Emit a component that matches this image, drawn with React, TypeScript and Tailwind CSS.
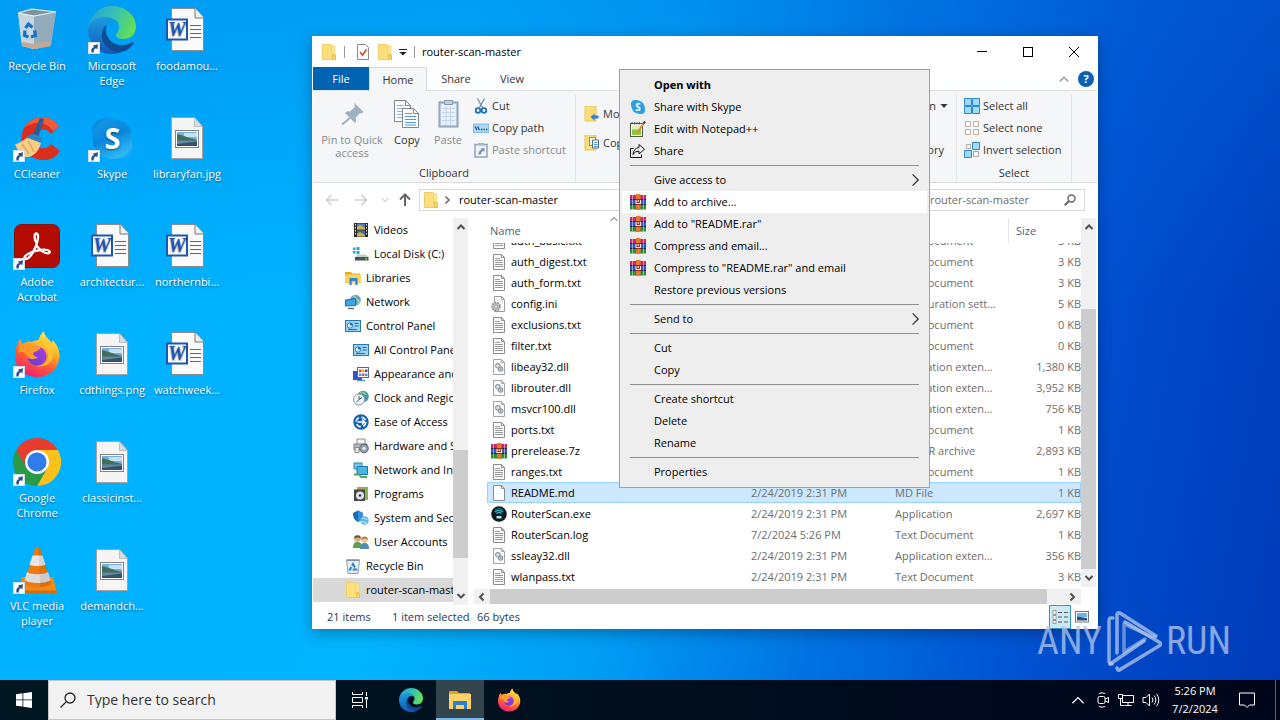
import React from "react";

type P = { className?: string };
type IconType = (p: P) => React.ReactElement;

/* ---------- desktop icons ---------- */

const ShortcutBadge = () => (
  <svg viewBox="0 0 12 12" className="absolute bottom-0 left-0 size-3">
    <rect width="12" height="12" fill="#fff" />
    <rect x=".5" y=".5" width="11" height="11" fill="none" stroke="#d5dde6" />
    <path d="M3.500 10.500C2.800 7.500 3.800 5.600 6 5L5 3.500l5-1.200-.6 5L8 6.200C6.200 6.800 5.600 8 5.800 10.500z" fill="#2d4f8e" />
  </svg>
);

const BinIcon: IconType = ({ className }) => (
  <svg viewBox="0 0 48 48" className={className}>
    <path d="M5 7l14-4 24 3-6 34-16 3-12-3z" fill="#a9c0cf" />
    <path d="M5 7l16 3v33l-12-3z" fill="#c6d6df" />
    <path d="M21 10l22-4-5 34-17 3z" fill="#93abbb" />
    <path d="M9 36l12 2 17-3-1 5-16 3-12-3z" fill="#c3a995" />
    <path d="M5 7l14-4 24 3-22 4z" fill="#7e909c" stroke="#eef5f9" strokeWidth="1.200" />
    <g fill="none" stroke="#1473c8" strokeWidth="3.200">
      <path d="M12.500 22l3-4 4 3.500" />
      <path d="M21.500 24.500l1 5-4.500 1.500" />
      <path d="M15.500 31l-4-1.500.5-5" />
    </g>
  </svg>
);

const EdgeIcon: IconType = ({ className }) => (
  <svg viewBox="0 0 48 48" className={className}>
    <defs>
      <linearGradient id="edgeTop" x1="0" y1=".3" x2="1" y2=".6">
        <stop offset="0" stopColor="#2aa0d4" />
        <stop offset=".5" stopColor="#36c2b4" />
        <stop offset="1" stopColor="#66e050" />
      </linearGradient>
      <linearGradient id="edgeLeft" x1="0" y1="0" x2="0" y2="1">
        <stop offset="0" stopColor="#1a9de0" />
        <stop offset="1" stopColor="#1257b8" />
      </linearGradient>
    </defs>
    <path d="M0 23C2 8 13 0 24 0c14 0 24 10 24 20 0 9-6 13-13 13-5 0-7-2-7-4s3-3 3-8c0-6-6-9.500-13-9.500C9 11.500 3 16 0 23z" fill="url(#edgeTop)" />
    <path d="M0 24c0-8 8-13 17-13 7 0 12 3 13.500 7C28 15 22 15 18.500 19 12 27 17 43 33 46.300 30 47.500 27 48 24 48 10 48 0 37 0 24z" fill="url(#edgeLeft)" />
    <path d="M18.500 19c-2 8 1 14 7 18 6 3.500 13 2.500 18-.500 2-1 2.500.500 1.500 2-3 4-7 6.500-12 7.800C20 46 12 36 14 27c.8-4 2.500-6.500 4.500-8z" fill="#114b94" />
  </svg>
);

const WordIcon: IconType = ({ className }) => (
  <svg viewBox="0 0 48 48" className={className}>
    <path d="M8.500 2.500h24l8 9v33h-32z" fill="#fafafa" stroke="#8b8b8b" />
    <path d="M32 2.500v9.500h9" fill="#eef0f2" stroke="#777" />
    <g stroke="#3f6cb6" strokeWidth="1.200">
      <path d="M27 19.500h11M27 23.500h11M27 27.500h11M27 31.500h11" />
    </g>
    <rect x="4" y="13.500" width="20" height="20" fill="#fff" stroke="#1d55b5" strokeWidth="2" />
    <text x="14" y="30" textAnchor="middle" fontFamily="Liberation Serif, serif" fontSize="20" fontWeight="bold" fontStyle="italic" fill="#1d55b5">W</text>
  </svg>
);

const ImageFileIcon: IconType = ({ className }) => (
  <svg viewBox="0 0 48 48" className={className}>
    <path d="M8.500 3.500h23l8 9v32h-31z" fill="#f5f5f5" stroke="#a8a19b" />
    <path d="M31.500 3.500v9h8z" fill="#d3dfe8" stroke="#b7b2ae" strokeWidth=".8" />
    <rect x="12.500" y="16.500" width="23" height="17" fill="#fff" stroke="#7e8487" />
    <path d="M14 18h20v7H14z" fill="#77afe2" />
    <path d="M21 19h13v4H21z" fill="#c7e0f3" />
    <path d="M14 20l7 2 7 2.500 6 1V27H14z" fill="#426d57" />
    <path d="M14 26.500h20V32H14z" fill="#6389a3" />
    <path d="M14 30l20-2.500V32H14z" fill="#315270" />
  </svg>
);

const CCleanerIcon: IconType = ({ className }) => (
  <svg viewBox="0 0 48 48" className={className}>
    <path d="M46 12C38-1 18 1 11 14 4 28 13 45 29 46c8 .5 14-3 18-9l-9-7c-5 7-15 5-16-3-2-10 10-16 16-7z" fill="#dc2e1f" />
    <path d="M46 12C38-1 18 1 11 14c9-7 21-8 29 3z" fill="#f15a38" />
    <path d="M27 4l4 1-8 25-6-2z" fill="#285f99" />
    <path d="M13 24c3-6 11-5 16 1l-3 5-13-1z" fill="#337fc0" />
    <path d="M2 30c6 0 9-6 13-6l13 5c-2 8-7 13-13 14C8 44 5 37 2 30z" fill="#f8ce83" />
    <path d="M9 30l7 10M15 27l6 11" stroke="#e3a659" strokeWidth="1.500" />
  </svg>
);

const SkypeIcon: IconType = ({ className }) => (
  <svg viewBox="0 0 48 48" className={className}>
    <defs>
      <linearGradient id="skype" x1="0" y1="0" x2=".5" y2="1">
        <stop offset="0" stopColor="#149be9" />
        <stop offset=".55" stopColor="#0a86dc" />
        <stop offset="1" stopColor="#2cb9f3" />
      </linearGradient>
    </defs>
    <circle cx="17" cy="17" r="13" fill="#0d8edf" />
    <circle cx="33" cy="33" r="12" fill="#1da9ef" />
    <circle cx="24.500" cy="25" r="20" fill="url(#skype)" />
    <text x="24.500" y="35" textAnchor="middle" fontFamily="Open Sans, sans-serif" fontSize="29" fontWeight="bold" fill="#fff">S</text>
  </svg>
);

const AcrobatIcon: IconType = ({ className }) => (
  <svg viewBox="0 0 48 48" className={className}>
    <rect x="1.500" y="2.500" width="45" height="43" rx="7" fill="#b30b00" stroke="#7c1713" />
    <path d="M23.500 21c-3-5-2-9.500-.2-9.500 2.500 0 2.500 6-1 14-3 7-7 11.500-9.500 11.500-2.300 0-2-3 3-5.500 5-2.600 14-4.500 18.500-3.500 3.500.8 3 3.300.3 3.300-3.200 0-8-3-11-8" fill="none" stroke="#fff" strokeWidth="2.300" />
  </svg>
);

const FirefoxIcon: IconType = ({ className }) => (
  <svg viewBox="0 0 48 48" className={className}>
    <defs>
      <linearGradient id="foxBody" x1=".8" y1="0" x2=".3" y2="1">
        <stop offset="0" stopColor="#fff44f" />
        <stop offset=".35" stopColor="#ffb52b" />
        <stop offset=".65" stopColor="#ff5c36" />
        <stop offset="1" stopColor="#f01c78" />
      </linearGradient>
      <linearGradient id="foxCore" x1="0" y1="1" x2="1" y2="0">
        <stop offset="0" stopColor="#5b3fd0" />
        <stop offset="1" stopColor="#b43be0" />
      </linearGradient>
    </defs>
    <path d="M8 9c0 2 .5 4 1.500 5 3-2 6-3 9-2 2-1 4-2 7-2 1-4 3-7 5.500-9 0 5 5 8 8 12l.5-3c4 4 7.500 10 7 17-1 12-10 20-22 20C11 47 2 38 2 26c0-7 2-13 6-17z" fill="url(#foxBody)" />
    <circle cx="24" cy="26" r="9.500" fill="url(#foxCore)" />
    <path d="M7 16c4-4 9-4 13-1 2 2 5 2 8 2-1 4-7 4-8 7 1 2 3 3 5 3-3 3-9 3-11-1-2-5-5-5-9-3z" fill="#ff9a2a" />
    <path d="M25 11c7 2 11 8 10 16-1 6-6 9-12 9 8 2 16-2 17-10 1-9-5-16-15-15z" fill="#ffc832" opacity=".8" />
  </svg>
);

const ChromeIcon: IconType = ({ className }) => (
  <svg viewBox="0 0 48 48" className={className}>
    <path d="M24 48A24 24 0 0 0 44.800 12H24l10.400 18z" fill="#fcc21b" />
    <path d="M3.200 12A24 24 0 0 1 44.800 12H24L13.600 30z" fill="#ea3b30" />
    <path d="M3.200 12A24 24 0 0 0 24 48l10.400-18L24 32 13.600 30z" fill="#2a9a47" />
    <circle cx="24" cy="24" r="12" fill="#fff" />
    <circle cx="24" cy="24" r="9.600" fill="#2f7cea" />
  </svg>
);

const VlcIcon: IconType = ({ className }) => (
  <svg viewBox="0 0 48 48" className={className}>
    <path d="M9 31h31l4 16H5z" fill="#f08a13" />
    <path d="M5 44.500h38.600l.6 2.500H5z" fill="#d66a05" />
    <path d="M22 2.500c1-1.500 4-1.500 5 0l11 35c-2 5-25 5-27 0z" fill="#ec7a0e" />
    <path d="M19.500 9.500h10l3 9c-3 2-13 2-16 0z" fill="#e7e7e7" />
    <path d="M14 26c4 3 17 3 21 0l2.500 8c-4 4-22 4-26 0z" fill="#dcdcdc" />
    <path d="M25 1.500c1 0 2 .3 2.300 1l11 35c-1 2-6 3.500-11 3.700z" fill="#000" opacity=".08" />
  </svg>
);

type DesktopItem = { label: string; icon: IconType; shortcut?: boolean };
const desktop: DesktopItem[] = [
  { label: "Recycle Bin", icon: BinIcon },
  { label: "CCleaner", icon: CCleanerIcon, shortcut: true },
  { label: "Adobe Acrobat", icon: AcrobatIcon, shortcut: true },
  { label: "Firefox", icon: FirefoxIcon, shortcut: true },
  { label: "Google Chrome", icon: ChromeIcon, shortcut: true },
  { label: "VLC media player", icon: VlcIcon, shortcut: true },
  { label: "Microsoft Edge", icon: EdgeIcon, shortcut: true },
  { label: "Skype", icon: SkypeIcon, shortcut: true },
  { label: "architectur...", icon: WordIcon },
  { label: "cdthings.png", icon: ImageFileIcon },
  { label: "classicinst...", icon: ImageFileIcon },
  { label: "demandch...", icon: ImageFileIcon },
  { label: "foodamou...", icon: WordIcon },
  { label: "libraryfan.jpg", icon: ImageFileIcon },
  { label: "northernbi...", icon: WordIcon },
  { label: "watchweek...", icon: WordIcon },
];

/* ---------- small icons ---------- */

const FolderIcon: IconType = ({ className }) => (
  <svg viewBox="0 0 16 16" className={className}>
    <path d="M1.500.5H10l1.500 1.500V15.500h-10z" fill="#fddf7c" stroke="#f0cd6a" />
    <path d="M10.500 2h3.500v9h-3.500z" fill="#ffe695" stroke="#efcc6c" strokeWidth=".7" />
    <path d="M11.500 10.500l3 .5v4.500h-3z" fill="#fbd35c" stroke="#e9c04e" />
  </svg>
);

const RarIcon: IconType = ({ className }) => (
  <svg viewBox="0 0 16 16" className={className}>
    <rect y="1" width="16" height="5" fill="#c92a63" />
    <rect y="6" width="16" height="5" fill="#3356c4" />
    <rect y="11" width="16" height="4.500" fill="#278c3b" />
    <path d="M0 5.500h16M0 10.500h16" stroke="#14204e" />
    <path d="M2.500 1v14.500M13.500 1v14.500" stroke="#fff" strokeOpacity=".45" />
    <rect x="6" y="0" width="4.500" height="16" fill="#e47a28" />
    <rect x="5" y="5" width="6.500" height="6" fill="#8a2c20" />
    <path d="M6 6v3.500h4.500V6M8.200 6v2" stroke="#f3e9dc" strokeWidth="1.200" fill="none" />
  </svg>
);

const TextIcon: IconType = ({ className }) => (
  <svg viewBox="0 0 16 16" className={className}>
    <path d="M2.500.5h8l3 3v12h-11z" fill="#fdfdfd" stroke="#8d8d8d" />
    <path d="M10.500.5v3h3" fill="none" stroke="#8d8d8d" />
    <path d="M4 4.500h5M4 6.500h8M4 8.500h8M4 10.500h8M4 12.500h8" stroke="#9a9a9a" />
  </svg>
);
const BlankIcon: IconType = ({ className }) => (
  <svg viewBox="0 0 16 16" className={className}>
    <path d="M2.500.5h8l3 3v12h-11z" fill="#fff" stroke="#8d8d8d" />
    <path d="M10.500.5v3h3" fill="none" stroke="#8d8d8d" />
  </svg>
);
const DllIcon: IconType = ({ className }) => (
  <svg viewBox="0 0 16 16" className={className}>
    <path d="M2.500.5h8l3 3v12h-11z" fill="#fbfbfb" stroke="#a3a3a3" />
    <path d="M10.500.5v3h3" fill="none" stroke="#a3a3a3" />
    <circle cx="6.800" cy="6.800" r="2.200" fill="#e5eaee" stroke="#8c98a1" strokeWidth="1.200" />
    <circle cx="9.500" cy="10" r="2.200" fill="#d5dce1" stroke="#8c98a1" strokeWidth="1.200" />
    <circle cx="9.500" cy="10" r=".7" fill="#6f7b84" />
  </svg>
);
const IniIcon: IconType = ({ className }) => (
  <svg viewBox="0 0 16 16" className={className}>
    <path d="M3.500.5h7l3 3v12h-10z" fill="#fbfbfb" stroke="#9c9c9c" />
    <path d="M10.500.5v3h3" fill="none" stroke="#9c9c9c" />
    <circle cx="5" cy="10.500" r="4" fill="#c9c9c9" stroke="#8a8a8a" strokeDasharray="1.800 1" strokeWidth="1.600" />
    <circle cx="5" cy="10.500" r="1.500" fill="#fff" stroke="#777" strokeWidth=".8" />
  </svg>
);
const RouterIcon: IconType = ({ className }) => (
  <svg viewBox="0 0 16 16" className={className}>
    <circle cx="8" cy="8" r="7.800" fill="#0c1a22" />
    <path d="M3.800 6a6 6 0 0 1 8.400 0M5.400 7.600a3.800 3.800 0 0 1 5.200 0" stroke="#2bb8d8" fill="none" strokeWidth="1.200" />
    <path d="M5.500 10h5v2.500h-5z" fill="#b9e5ee" />
    <path d="M4 3.800a7 7 0 0 1 8 0" stroke="#1c7d94" fill="none" />
  </svg>
);

const VideosIcon: IconType = ({ className }) => (
  <svg viewBox="0 0 16 16" className={className}>
    <rect x="1" y="1" width="14" height="14" fill="#2b2b2b" />
    <rect x="4" y="1.500" width="8" height="6" fill="#4a7fc4" />
    <rect x="4" y="8.500" width="8" height="6" fill="#3c6cab" />
    <path d="M4 5l3-2 5 3v1.500H4zM4 12l3-2 5 3v1.500H4z" fill="#d8b23c" />
    <path d="M2.500 2v12M13.500 2v12" stroke="#e5e5e5" strokeDasharray="1.500 1.500" />
  </svg>
);
const DiskIcon: IconType = ({ className }) => (
  <svg viewBox="0 0 16 16" className={className}>
    <path d="M0 1.500h2.500v2.500H0zM3.500 1h3v3h-3zM0 5h2.500v2.500H0zM3.500 5h3v3h-3z" fill="#1fa6dc" />
    <path d="M4 8.500h9l2.500 3h-13z" fill="#c9cdd0" />
    <rect x="2" y="11" width="13.500" height="3.500" fill="#4c5358" />
    <rect x="12" y="12" width="2" height="1.500" fill="#57d357" />
  </svg>
);
const LibrariesIcon: IconType = ({ className }) => (
  <svg viewBox="0 0 16 16" className={className}>
    <path d="M0 2h6l1 1.500h8V6H0z" fill="#e8a825" />
    <path d="M0 4.500h16v9H0z" fill="#fdd35f" />
    <path d="M4.500 8h8v7h-2.200v-4H6.700v4H4.500z" fill="#2f87d5" />
  </svg>
);
const NetworkIcon: IconType = ({ className }) => (
  <svg viewBox="0 0 16 16" className={className}>
    <circle cx="10.500" cy="6" r="5.300" fill="#6a9fc6" />
    <path d="M8 1.500c3 1 1 3 4 4s2 3 1 5" stroke="#a9d3a5" strokeWidth="1.500" fill="none" />
    <path d="M.5 6l10-1.500v7L.5 12z" fill="#3ba5e6" stroke="#1c6ea6" />
    <path d="M3 14.500h6" stroke="#5a7384" strokeWidth="1.500" />
  </svg>
);
const ControlIcon: IconType = ({ className }) => (
  <svg viewBox="0 0 16 16" className={className}>
    <rect x=".5" y="2.500" width="15" height="11" fill="#9bd3f2" stroke="#2b76ac" />
    <circle cx="5" cy="7.500" r="2.700" fill="#e6f4fb" stroke="#2579b7" />
    <path d="M5 7.500V5a2.500 2.500 0 0 1 2.500 2.500z" fill="#1c6aab" />
    <path d="M9.500 5.500h4M9.500 8h4M3 11.500h9" stroke="#1f6ea9" />
  </svg>
);
const AppearanceIcon: IconType = ({ className }) => (
  <svg viewBox="0 0 16 16" className={className}>
    <rect x="0" y="5" width="9" height="9" fill="#3850c8" />
    <rect x="4.500" y="1.500" width="11" height="10" fill="#fff" stroke="#5b6a78" />
    <path d="M6 3.500h2.500V6H6z" fill="#e0483a" />
    <path d="M9 3.500h2.500V6H9z" fill="#f2a52c" />
    <path d="M12 3.500h2.500V6H12z" fill="#5b3ca8" />
    <path d="M6 7.500h2.500V10H6zM12 7.500h2.500V10H12z" fill="#39a0db" />
    <path d="M9 7.500h2.500V10H9z" fill="#d34f9c" />
    <path d="M4 14.500h8" stroke="#5b8fb8" strokeWidth="1.500" />
  </svg>
);
const ClockIcon: IconType = ({ className }) => (
  <svg viewBox="0 0 16 16" className={className}>
    <circle cx="10" cy="6.500" r="5.800" fill="#4b93a8" />
    <path d="M7 2c3 1 4 0 6 3" stroke="#8fc48a" strokeWidth="2" fill="none" />
    <circle cx="6" cy="9.500" r="5.500" fill="#eef3f6" stroke="#8399a6" />
    <path d="M6 6v3.500L3.500 12M6 9.500l3-2" stroke="#41525d" fill="none" />
  </svg>
);
const EaseIcon: IconType = ({ className }) => (
  <svg viewBox="0 0 16 16" className={className}>
    <circle cx="8" cy="8" r="7.700" fill="#1260b0" />
    <circle cx="8" cy="8" r="4.800" fill="none" stroke="#fff" strokeDasharray="5 2.500" strokeWidth="1.500" />
    <path d="M4.500 8h7M9 5.500L11.500 8 9 10.500" stroke="#fff" strokeWidth="1.300" fill="none" />
  </svg>
);
const HardwareIcon: IconType = ({ className }) => (
  <svg viewBox="0 0 16 16" className={className}>
    <path d="M4 1h8v6H4z" fill="#f4f4f4" stroke="#8b8b8b" />
    <path d="M1 6h13v6H1z" fill="#b7bcc0" stroke="#73797e" />
    <circle cx="11" cy="10.500" r="4.300" fill="#91a1ac" stroke="#56636c" />
    <circle cx="11" cy="10.500" r="1.800" fill="#dfe7ec" />
    <path d="M2 9.500h4v5H2z" fill="#e8e8e8" stroke="#8b8b8b" />
  </svg>
);
const NetInternetIcon: IconType = ({ className }) => (
  <svg viewBox="0 0 16 16" className={className}>
    <path d="M1 1h8v6H1z" fill="#6fcbe9" stroke="#2a86a8" />
    <path d="M4 4.500h10.500v8H4z" fill="#45b4e6" stroke="#1c77a8" />
    <path d="M1 12.500h5L8 15h6" stroke="#52a851" strokeWidth="1.800" fill="none" />
  </svg>
);
const ProgramsIcon: IconType = ({ className }) => (
  <svg viewBox="0 0 16 16" className={className}>
    <path d="M4 1h10v11H4z" fill="#c8974c" />
    <path d="M11 1h4v13h-4z" fill="#86b457" />
    <rect x="1" y="3.500" width="11" height="11.500" fill="#45484b" />
    <circle cx="7" cy="9.500" r="4" fill="#dfe3e6" />
    <circle cx="7" cy="9.500" r="1.200" fill="#2b2b2b" />
  </svg>
);
const SystemIcon: IconType = ({ className }) => (
  <svg viewBox="0 0 16 16" className={className}>
    <path d="M0 3l5-2.500L10 3c0 5-1 7-5 9C1 10 0 7 0 3z" fill="#1a68b8" />
    <path d="M5 .5L10 3c0 5-1 7-5 9z" fill="#3394dc" />
    <circle cx="11.500" cy="10.500" r="4.300" fill="#58b9e6" />
    <path d="M9 9c2-2 3 1 5.500 0M8 12c3-1 3 1 6 1" stroke="#e0f3fb" fill="none" />
  </svg>
);
const UsersIcon: IconType = ({ className }) => (
  <svg viewBox="0 0 16 16" className={className}>
    <path d="M0 14c0-5 2-6 4.500-6S9 9 9 14z" fill="#5fa04b" />
    <path d="M7 15c0-5 2-6 4.500-6S16 10 16 15z" fill="#4f8cc0" />
    <circle cx="4.500" cy="4.500" r="3.300" fill="#d9ad7e" />
    <path d="M1.200 4.500a3.300 3.300 0 0 1 6.600 0C6 3 4 3 1.200 4.500z" fill="#765034" />
    <circle cx="11.500" cy="5.500" r="3.300" fill="#ecc79c" />
    <path d="M8.200 6a3.300 3.300 0 0 1 6.600 0c-2-2-4-2-6.600 0z" fill="#b07a3a" />
  </svg>
);
const BinSmallIcon: IconType = ({ className }) => (
  <svg viewBox="0 0 16 16" className={className}>
    <path d="M1.500 2.500h13l-1.500 13H3z" fill="#e4edf3" stroke="#93a3ad" />
    <path d="M1.500 2h13" stroke="#7c8d98" strokeWidth="1.500" />
    <path d="M8 6l3 5.500H5z" fill="none" stroke="#2580c9" strokeWidth="2" strokeDasharray="4 1.500" />
  </svg>
);

const Chevron = ({ dir, className }: { dir: "up" | "down" | "left" | "right"; className: string }) => {
  const d = {
    up: "M1.500 7L5 3.500 8.500 7",
    down: "M1.500 3L5 6.500 8.500 3",
    left: "M6.500 1.500L3 5l3.500 3.500",
    right: "M3.500 1.500L7 5 3.500 8.500",
  }[dir];
  return (
    <svg viewBox="0 0 10 10" fill="none" stroke="currentColor" className={className}>
      <path d={d} />
    </svg>
  );
};

/* ---------- ribbon icons ---------- */

const PinIcon: IconType = ({ className }) => (
  <svg viewBox="0 0 32 32" className={className}>
    <path d="M18.500 4l9 9-2 1.500-1.500-.500-4.500 5c1 2 .5 4-.5 5L9 14c1-1.500 3.500-2 5-1.500l5-4.500-.5-1.500z" fill="#9db0c4" />
    <path d="M14 19l-8 6.500" stroke="#9db0c4" strokeWidth="2" />
  </svg>
);
const CopyIcon: IconType = ({ className }) => (
  <svg viewBox="0 0 32 32" className={className}>
    <path d="M3.500 1.500h11l5 5v16h-16z" fill="#fff" stroke="#7b8794" />
    <path d="M14.500 1.500v5h5" fill="none" stroke="#7b8794" />
    <path d="M6 6.500h7M6 9.500h11M6 12.500h11M6 15.500h11M6 18.500h11" stroke="#84b6e8" />
    <path d="M11.500 9.500h11l5 5v14h-16z" fill="#fff" stroke="#7b8794" />
    <path d="M22.500 9.500v5h5" fill="none" stroke="#7b8794" />
    <path d="M14 14.500h7M14 17.500h11M14 20.500h11M14 23.500h11M14 26h11" stroke="#4f97de" />
  </svg>
);
const PasteIcon: IconType = ({ className }) => (
  <svg viewBox="0 0 32 32" className={className}>
    <rect x="7.500" y="3.500" width="18" height="24" fill="#e9f0f9" stroke="#97a8c1" strokeWidth="2.200" />
    <path d="M12.500 1.500h8v4h-8z" fill="#c3cfdd" stroke="#8296ae" />
    <path d="M10 9.500h13M10 13.500h13M10 17.500h13M10 21.500h13M14 8v18M18.500 8v18" stroke="#c4d5ea" />
  </svg>
);
const CutIcon: IconType = ({ className }) => (
  <svg viewBox="0 0 16 16" className={className}>
    <path d="M4.500.5l5.500 10M11.500.5L6 10.500" stroke="#8195a6" strokeWidth="1.400" />
    <circle cx="5" cy="12.500" r="2.300" fill="none" stroke="#1b75bc" strokeWidth="1.800" />
    <circle cx="11" cy="12.500" r="2.300" fill="none" stroke="#1b75bc" strokeWidth="1.800" />
  </svg>
);
const PathIcon: IconType = ({ className }) => (
  <svg viewBox="0 0 16 16" className={className}>
    <rect x=".5" y="4" width="15" height="8.500" fill="#a9d9f7" stroke="#80bce6" />
    <path d="M2 6.500l2 3.500M4.500 6.500l2 3.500" stroke="#174a78" strokeWidth="1.200" />
    <path d="M8 9.500h1.300M10.500 9.500h1.300M13 9.500h1.300" stroke="#174a78" strokeWidth="1.300" />
  </svg>
);
const PasteShortcutIcon: IconType = ({ className }) => (
  <svg viewBox="0 0 16 16" className={className}>
    <rect x="2" y="2.500" width="12" height="12.500" fill="#f0f4fa" stroke="#8fa2bd" strokeWidth="1.500" />
    <path d="M5 1h6v2.500H5z" fill="#a9b8ca" />
    <path d="M5.500 12.500c0-3 1-4.500 3-4.500L7.500 6.500l4-.5v4l-1.300-1C8.500 9.500 8 10.500 8 12.500z" fill="#7d92b1" />
  </svg>
);
const MoveIcon: IconType = ({ className }) => (
  <svg viewBox="0 0 16 16" className={className}>
    <path d="M1 0h11v15H1z" fill="#fcdc77" stroke="#e7c45f" />
    <path d="M14.500 9.500h-4V7.500L6.500 11l4 3.500v-2h4z" fill="#2f7fd3" />
  </svg>
);
const CopyToIcon: IconType = ({ className }) => (
  <svg viewBox="0 0 16 16" className={className}>
    <path d="M1 0h11v15H1z" fill="#fcdc77" stroke="#e7c45f" />
    <path d="M5.500 2.500h6v8h-6z" fill="#fff" stroke="#7d8793" />
    <path d="M8.500 5h6v8h-6z" fill="#fff" stroke="#5a6a80" />
    <path d="M10 7.500h3.500M10 9.500h3.500M10 11.500h3.500" stroke="#4f97de" />
  </svg>
);
const SelectAllIcon: IconType = ({ className }) => (
  <svg viewBox="0 0 16 16" className={className}>
    <path d="M.5.5h7v7h-7zM8.500.5h7v7h-7zM.5 8.500h7v7h-7zM8.500 8.500h7v7h-7z" fill="#9cdcfb" stroke="#2d8ac9" />
  </svg>
);
const SelectNoneIcon: IconType = ({ className }) => (
  <svg viewBox="0 0 16 16" className={className}>
    <path d="M1.500 1.500h5v5h-5zM9.500 1.500h5v5h-5zM1.500 9.500h5v5h-5zM9.500 9.500h5v5h-5z" fill="#fdfdfd" stroke="#c0a99f" />
  </svg>
);
const InvertIcon: IconType = ({ className }) => (
  <svg viewBox="0 0 16 16" className={className}>
    <path d="M2.500 2.500h4v4h-4zM9.500 9.500h5v5h-5z" fill="#fdfdfd" stroke="#b3a39d" />
    <path d="M8.500.5h7v7h-7zM.5 8.500h7v7h-7z" fill="#9cdcfb" stroke="#2d8ac9" />
  </svg>
);

/* ---------- explorer data ---------- */

const tree: { label: string; icon: IconType; deep?: boolean; selected?: boolean }[] = [
  { label: "Videos", icon: VideosIcon, deep: true },
  { label: "Local Disk (C:)", icon: DiskIcon, deep: true },
  { label: "Libraries", icon: LibrariesIcon },
  { label: "Network", icon: NetworkIcon },
  { label: "Control Panel", icon: ControlIcon },
  { label: "All Control Panel Items", icon: ControlIcon, deep: true },
  { label: "Appearance and Personalization", icon: AppearanceIcon, deep: true },
  { label: "Clock and Region", icon: ClockIcon, deep: true },
  { label: "Ease of Access", icon: EaseIcon, deep: true },
  { label: "Hardware and Sound", icon: HardwareIcon, deep: true },
  { label: "Network and Internet", icon: NetInternetIcon, deep: true },
  { label: "Programs", icon: ProgramsIcon, deep: true },
  { label: "System and Security", icon: SystemIcon, deep: true },
  { label: "User Accounts", icon: UsersIcon, deep: true },
  { label: "Recycle Bin", icon: BinSmallIcon },
  { label: "router-scan-master", icon: FolderIcon, selected: true },
];

const old = "2/24/2019 2:31 PM";
const files: [string, IconType, string, string, string][] = [
  ["auth_basic.txt", TextIcon, old, "Text Document", "3 KB"],
  ["auth_digest.txt", TextIcon, old, "Text Document", "3 KB"],
  ["auth_form.txt", TextIcon, old, "Text Document", "3 KB"],
  ["config.ini", IniIcon, old, "Configuration sett...", "5 KB"],
  ["exclusions.txt", TextIcon, old, "Text Document", "0 KB"],
  ["filter.txt", TextIcon, old, "Text Document", "0 KB"],
  ["libeay32.dll", DllIcon, old, "Application exten...", "1,380 KB"],
  ["librouter.dll", DllIcon, old, "Application exten...", "3,952 KB"],
  ["msvcr100.dll", DllIcon, old, "Application exten...", "756 KB"],
  ["ports.txt", TextIcon, old, "Text Document", "1 KB"],
  ["prerelease.7z", RarIcon, old, "WinRAR archive", "2,893 KB"],
  ["ranges.txt", TextIcon, old, "Text Document", "1 KB"],
  ["README.md", BlankIcon, old, "MD File", "1 KB"],
  ["RouterScan.exe", RouterIcon, old, "Application", "2,697 KB"],
  ["RouterScan.log", TextIcon, "7/2/2024 5:26 PM", "Text Document", "1 KB"],
  ["ssleay32.dll", DllIcon, old, "Application exten...", "356 KB"],
  ["wlanpass.txt", TextIcon, old, "Text Document", "3 KB"],
];

/* ---------- context menu ---------- */

const SkypeSmall: IconType = ({ className }) => (
  <svg viewBox="0 0 16 16" className={className}>
    <rect x="1" y="1" width="9" height="9" rx="4" fill="#2d9fe3" />
    <rect x="6" y="6" width="9" height="9" rx="4" fill="#2d9fe3" />
    <circle cx="8" cy="8" r="6.300" fill="#2d9fe3" />
    <text x="8" y="11.800" textAnchor="middle" fontFamily="Open Sans, sans-serif" fontSize="10" fontWeight="bold" fill="#fff">S</text>
  </svg>
);
const NotepadIcon: IconType = ({ className }) => (
  <svg viewBox="0 0 16 16" className={className}>
    <rect x=".5" y="2.500" width="12" height="13" fill="#fff" stroke="#4e5a4a" />
    <path d="M2 4.500h9v9.500H2z" fill="#dff0b0" />
    <path d="M2 8.500h9V14H2z" fill="#8fc63c" />
    <path d="M2 1v2.500M4.500 1v2.500M7 1v2.500M9.500 1v2.500" stroke="#555" />
    <path d="M14.500 1L9 9.500l-1 2" stroke="#d88a2d" strokeWidth="2" fill="none" />
    <path d="M13.500 2.500L15 .5" stroke="#5a2d22" strokeWidth="2" />
  </svg>
);
const ShareIcon: IconType = ({ className }) => (
  <svg viewBox="0 0 16 16" fill="none" stroke="#111" className={className}>
    <path d="M3.500 5.500H.5v9h11V11.500" />
    <path d="M9 1.500l5.500 4.700-5.500 4.800V8.200c-3 0-4.500 1-6 3.300.3-4 2.500-6.500 6-7z" />
  </svg>
);

type MenuEntry = { label: string; icon?: IconType; sub?: boolean; bold?: boolean; active?: boolean };
const menu: MenuEntry[][] = [
  [
    { label: "Open with", bold: true },
    { label: "Share with Skype", icon: SkypeSmall },
    { label: "Edit with Notepad++", icon: NotepadIcon },
    { label: "Share", icon: ShareIcon },
  ],
  [
    { label: "Give access to", sub: true },
    { label: "Add to archive...", icon: RarIcon, active: true },
    { label: 'Add to "README.rar"', icon: RarIcon },
    { label: "Compress and email...", icon: RarIcon },
    { label: 'Compress to "README.rar" and email', icon: RarIcon },
    { label: "Restore previous versions" },
  ],
  [{ label: "Send to", sub: true }],
  [{ label: "Cut" }, { label: "Copy" }],
  [{ label: "Create shortcut" }, { label: "Delete" }, { label: "Rename" }],
  [{ label: "Properties" }],
];

function ContextMenu() {
  return (
    <div role="menu" className="absolute left-[619px] top-[69px] w-[311px] border border-[#a0a0a0] bg-[#eeeeee] px-0.5 py-1 text-black">
      {menu.map((group, i) => (
        <div key={i} role="group">
          {i > 0 && <hr className="mx-2 my-[3px] border-t border-[#909090]" />}
          {group.map((m) => (
            <button
              key={m.label}
              role="menuitem"
              className={`flex h-[22px] w-full items-center pl-2 pr-1 text-left ${m.active ? "bg-white" : ""} ${m.bold ? "font-bold" : ""}`}
            >
              <span className="mr-2 size-4">{m.icon && <m.icon className="size-4" />}</span>
              <span className="flex-1">{m.label}</span>
              {m.sub && <Chevron dir="right" className="size-4 stroke-[0.8px] text-[#333]" />}
            </button>
          ))}
        </div>
      ))}
    </div>
  );
}

/* ---------- explorer window ---------- */

function TitleBar() {
  return (
    <header className="flex h-[31px] items-center pl-2">
      <FolderIcon className="size-4" />
      <span className="ml-[7px] h-3 w-px bg-[#999]" />
      <button aria-label="Properties" className="ml-2.5">
        <svg viewBox="0 0 16 16" className="size-4">
          <path d="M2.500.5h8l3 3v12h-11z" fill="#fff" stroke="#8b8b8b" />
          <path d="M5 8l2.500 3 4-5.500" fill="none" stroke="#d3572b" strokeWidth="1.800" />
        </svg>
      </button>
      <button aria-label="New folder" className="ml-1.5">
        <FolderIcon className="size-4" />
      </button>
      <button aria-label="Customize toolbar" className="ml-1.5">
        <svg viewBox="0 0 8 8" className="size-2">
          <path d="M0 1.500h8" stroke="#222" />
          <path d="M.5 4h7L4 7.500z" fill="#222" />
        </svg>
      </button>
      <span className="ml-[7px] h-3 w-px bg-[#999]" />
      <h1 className="ml-[7px] flex-1 text-black">router-scan-master</h1>
      <button aria-label="Minimize" className="flex h-full w-[46px] items-center justify-center">
        <span className="h-px w-2.5 bg-black" />
      </button>
      <button aria-label="Maximize" className="flex h-full w-[46px] items-center justify-center">
        <span className="size-2.5 border border-black" />
      </button>
      <button aria-label="Close" className="flex h-full w-[46px] items-center justify-center">
        <svg viewBox="0 0 10 10" className="size-2.5" stroke="#000">
          <path d="M0 0l10 10M10 0L0 10" />
        </svg>
      </button>
    </header>
  );
}

function Tabs() {
  return (
    <nav className="flex h-6 border-b border-[#e0e3e6] text-[#333]">
      <button className="w-14 bg-[#0063b1] text-white">File</button>
      <button className="-mb-px w-[58px] border border-b-0 border-[#dadbdc] bg-[#f5f6f7]">Home</button>
      <button className="w-[58px]">Share</button>
      <button className="w-[54px]">View</button>
      <span className="flex-1" />
      <button aria-label="Collapse ribbon" className="mr-2 text-[#aaa]">
        <Chevron dir="up" className="size-3 stroke-[1.5px]" />
      </button>
      <button aria-label="Help" className="mr-[3px] size-4 self-center rounded-full bg-[#0b62b4] text-[11px] leading-4 font-bold text-white">
        ?
      </button>
    </nav>
  );
}

const RibbonRow = ({ icon: Icon, label, muted }: { icon: IconType; label: string; muted?: boolean }) => (
  <button className={`flex h-[22px] items-center gap-[3px] ${muted ? "text-[#868b90]" : ""}`}>
    <Icon className="size-4" />
    {label}
  </button>
);

function Ribbon() {
  return (
    <section className="flex h-[92px] border-b border-[#d9dadb] bg-[#f5f6f7] pt-1 pb-px text-[#333]">
      <div className="flex w-[263px] flex-col border-r border-[#e2e3e4]">
        <div className="flex flex-1">
          <button className="flex w-[78px] flex-col items-center leading-[13px] text-[#868b90]">
            <PinIcon className="mt-1 mb-0.5 size-8" />
            <span className="w-[68px]">Pin to Quick access</span>
          </button>
          <button className="flex w-8 flex-col items-center leading-[13px]">
            <CopyIcon className="mt-1 mb-0.5 size-8" />
            Copy
          </button>
          <button className="flex w-[50px] flex-col items-center leading-[13px] text-[#868b90]">
            <PasteIcon className="mt-1 mb-0.5 size-8" />
            Paste
          </button>
          <div>
            <RibbonRow icon={CutIcon} label="Cut" />
            <RibbonRow icon={PathIcon} label="Copy path" />
            <RibbonRow icon={PasteShortcutIcon} label="Paste shortcut" muted />
          </div>
        </div>
        <div className="text-center leading-4">Clipboard</div>
      </div>
      <div className="flex flex-1 justify-between pr-2 pl-2">
        <div className="flex flex-col gap-[7px] pt-2">
          <RibbonRow icon={MoveIcon} label="Move to" />
          <RibbonRow icon={CopyToIcon} label="Copy to" />
        </div>
        <div className="flex flex-col items-end justify-between pb-5">
          <button className="flex h-[22px] items-center gap-1">
            Open
            <svg viewBox="0 0 8 4" className="h-1 w-2">
              <path d="M.5 0h7L4 4z" fill="#333" />
            </svg>
          </button>
          <button className="h-[22px] pr-1">History</button>
        </div>
      </div>
      <div className="mr-[25px] flex w-[116px] flex-col border-x border-[#e2e3e4] pl-[7px]">
        <div className="flex-1">
          <RibbonRow icon={SelectAllIcon} label="Select all" />
          <RibbonRow icon={SelectNoneIcon} label="Select none" />
          <RibbonRow icon={InvertIcon} label="Invert selection" />
        </div>
        <div className="pr-[7px] text-center leading-4">Select</div>
      </div>
    </section>
  );
}

const Arrow = ({ d, label, className }: { d: string; label: string; className: string }) => (
  <button aria-label={label} className={className}>
    <svg viewBox="0 0 14 14" fill="none" stroke="currentColor" className="size-3.5">
      <path d={d} />
    </svg>
  </button>
);

function AddressRow() {
  return (
    <div className="flex h-[35px] items-center pr-3 pb-px pl-3">
      <Arrow label="Back" d="M13 7H2M6.500 2L1.500 7l5 5" className="stroke-[1.5px] text-[#cfcfcf]" />
      <Arrow label="Forward" d="M1 7h11M7.500 2l5 5-5 5" className="ml-[15px] stroke-[1.5px] text-[#cfcfcf]" />
      <button aria-label="Recent locations" className="ml-3 text-[#dcdcdc]">
        <Chevron dir="down" className="size-2.5 stroke-[1.5px]" />
      </button>
      <Arrow label="Up" d="M7 13V2M2 6.500l5-5 5 5" className="ml-2 stroke-2 text-[#666]" />
      <div className="ml-[7px] flex h-[22px] flex-1 items-center border border-[#d9d9d9] pl-[3px]">
        <FolderIcon className="size-4" />
        <Chevron dir="right" className="ml-[3px] size-2.5 stroke-[1.5px] text-[#666]" />
        <button className="ml-[7px] text-black">router-scan-master</button>
      </div>
      <label className="ml-2 flex h-[22px] w-[205px] items-center border border-[#d9d9d9] pr-2">
        <input
          aria-label="Search router-scan-master"
          placeholder="Search router-scan-master"
          className="w-0 flex-1 pr-[35px] text-right outline-none placeholder:text-[#6d6d6d]"
        />
        <svg viewBox="0 0 12 12" fill="none" stroke="#666" className="size-3">
          <circle cx="7.500" cy="4.500" r="3.500" strokeWidth="1.400" />
          <path d="M5 7L.8 11.200" strokeWidth="2" />
        </svg>
      </label>
    </div>
  );
}

function VScroll({ before, thumb, after }: { before: string; thumb: string; after: string }) {
  return (
    <div aria-hidden="true" className="flex w-[15px] shrink-0 flex-col items-center bg-[#f0f0f0] text-[#505050]">
      <Chevron dir="up" className="my-1 size-2.5 shrink-0 stroke-2" />
      <div className={before} />
      <div className={`w-full bg-[#cdcdcd] ${thumb}`} />
      <div className={after} />
      <Chevron dir="down" className="my-1 size-2.5 shrink-0 stroke-2" />
    </div>
  );
}

const cols = "grid grid-cols-[264px_144px_113px_1fr]";

function Body() {
  return (
    <div className="flex min-h-0 flex-1">
      <nav className="w-[140px] shrink-0 overflow-hidden text-black">
        {tree.map((t) => (
          <button
            key={t.label}
            className={`flex h-6 w-full items-center gap-[5px] whitespace-nowrap ${t.deep ? "pl-10" : "pl-8"} ${t.selected ? "bg-[#d9d9d9]" : ""}`}
          >
            <t.icon className="size-4 shrink-0" />
            {t.label}
          </button>
        ))}
      </nav>
      <VScroll before="flex-[213]" thumb="flex-[108]" after="flex-[29]" />
      <div className="ml-1.5 flex min-w-0 flex-1 flex-col">
        <div className="flex min-h-0 flex-1">
          <table className="flex min-w-0 flex-1 flex-col pl-[13px]">
            <thead className="block">
              <tr className={`${cols} h-[25px] text-[#4c607a]`}>
                <th className="relative pl-[3px] text-left leading-[25px] font-normal">
                  Name
                  <Chevron dir="up" className="absolute -top-1 left-[122px] size-2.5 text-[#555]" />
                </th>
                <th />
                <th />
                <th className="border-l border-[#e5e5e5] pl-[7px] text-left leading-[25px] font-normal">Size</th>
              </tr>
            </thead>
            <tbody className="flex min-h-0 flex-1 flex-col justify-end overflow-hidden">
              {files.map(([name, Icon, date, type, size]) => (
                <tr
                  key={name}
                  className={`${cols} h-[21px] shrink-0 leading-[21px] whitespace-nowrap text-[#6d6d6d] ${name === "README.md" ? "bg-[#cce8ff] outline-1 -outline-offset-1 outline-[#99d1ff]" : ""}`}
                >
                  <td className="flex items-center gap-1 pl-1 text-black">
                    <Icon className="size-4" />
                    {name}
                  </td>
                  <td>{date}</td>
                  <td className="truncate">{type}</td>
                  <td className="text-right">{size}</td>
                </tr>
              ))}
            </tbody>
          </table>
          <VScroll before="flex-[73]" thumb="flex-[261]" after="" />
          <div className="w-px" />
        </div>
        <div aria-hidden="true" className="mt-0.5 mr-4 mb-px flex h-[15px] items-center bg-[#f0f0f0] text-[#505050]">
          <Chevron dir="left" className="mx-[3px] size-2.5 stroke-2" />
          <div className="h-full flex-1 bg-[#cdcdcd]" />
          <Chevron dir="right" className="mr-1 ml-5 size-2.5 stroke-2" />
        </div>
      </div>
    </div>
  );
}

function StatusBar() {
  return (
    <footer className="flex h-6 items-center pr-2 pl-3.5 text-[#1e395b]">
      <span className="w-[65px]">21 items</span>
      <span className="w-[85px] whitespace-nowrap">1 item selected</span>
      <span className="flex-1">66 bytes</span>
      <button aria-label="Details view" className="border border-[#3a93c5] bg-[#cbe8f6] px-px py-[3px]">
        <svg viewBox="0 0 18 16" className="h-4 w-[18px]">
          <path d="M2 1.500h3v4H2zM2 6.500h3v4H2zM2 11.500h3v3H2z" fill="#fff" stroke="#8a8079" strokeWidth=".8" />
          <path d="M7 3.500h4M7 8h4M7 13h4M13 3.500h4M13 8h4M13 13h4" stroke="#555" />
        </svg>
      </button>
      <button aria-label="Large icons view" className="ml-1">
        <svg viewBox="0 0 14 12" className="h-3 w-3.5">
          <rect x=".5" y=".5" width="13" height="10.500" fill="#fff" stroke="#777" />
          <path d="M2 2h10v4H2z" fill="#6fb3ea" />
          <path d="M2 5.500l10 1.500v2.500H2z" fill="#2c4f77" />
        </svg>
      </button>
    </footer>
  );
}

/* ---------- taskbar ---------- */

function Taskbar() {
  return (
    <footer className="flex h-10 items-stretch bg-linear-to-r from-[#001722] to-[#00061a] text-white">
      <button aria-label="Start" className="flex w-12 items-center justify-center">
        <svg viewBox="0 0 16 16" className="size-4" fill="#fff">
          <path d="M0 2.200L6.500 1.300v6.200H0zM7.300 1.200L16 0v7.500H7.300zM0 8.300h6.500v6.300L0 13.700zM7.300 8.300H16V16l-8.700-1.200z" />
        </svg>
      </button>
      <label className="flex w-72 items-center border border-[#c8c8c8] bg-[#f2f2f2] pl-[11px]">
        <svg viewBox="0 0 16 16" fill="none" stroke="#222" strokeWidth="1.300" className="size-4">
          <circle cx="10" cy="6" r="5" />
          <path d="M6.400 9.600L.5 15.500" />
        </svg>
        <input
          aria-label="Type here to search"
          placeholder="Type here to search"
          className="ml-[11px] w-0 flex-1 text-[14px] outline-none placeholder:text-[#333]"
        />
      </label>
      <button aria-label="Task view" className="flex w-12 items-center justify-center">
        <svg viewBox="0 0 16 16" fill="none" stroke="#fff" className="size-4">
          <path d="M.5 0v2.500h10V0M.5 16v-2.500h10V16M.5 5.500h10v5H.5zM14.500 0v4M14.500 8v8" />
          <path d="M13 5h3v2.500h-3z" fill="#fff" stroke="none" />
        </svg>
      </button>
      <button aria-label="Microsoft Edge" className="ml-0.5 flex w-[50px] items-center justify-center">
        <EdgeIcon className="size-6" />
      </button>
      <button aria-label="File Explorer" className="flex w-12 items-center justify-center border-b-2 border-[#76b9ed] bg-[#33444d]">
        <svg viewBox="0 0 22 18" className="mt-0.5 h-[18px] w-[22px]">
          <path d="M0 0h8l2 2h11v4H0z" fill="#e69f1c" />
          <path d="M0 3h22v15H0z" fill="#fdd267" />
          <path d="M4 10h14v8h-3v-4H7v4H4z" fill="#2c7fc9" />
        </svg>
      </button>
      <button aria-label="Firefox" className="flex w-[50px] items-center justify-center">
        <FirefoxIcon className="size-6" />
      </button>
      <span className="flex-1" />
      <div className="flex items-center gap-2">
        <button aria-label="Show hidden icons">
          <Chevron dir="up" className="size-4 stroke-[0.8px]" />
        </button>
        <svg viewBox="0 0 16 16" fill="none" stroke="#fff" className="size-4">
          <rect x="4" y="4.500" width="7" height="7" rx="1.500" />
          <path d="M11 7l3.500-1.500v5L11 9M5 1.500a7 7 0 0 1 6 0M5 14.500a7 7 0 0 0 6 0" />
        </svg>
        <svg viewBox="0 0 16 16" fill="none" stroke="#fff" className="size-4">
          <path d="M4.500 3.500h11v7h-11zM10 10.500v3M6.500 13.500h7M.5 2.500h4v4h-4zM2.500 6.500v7H6" />
        </svg>
        <svg viewBox="0 0 18 16" fill="none" stroke="#fff" className="h-4 w-[18px]">
          <path d="M1 5.500h3l3.500-3.500v12L4 10.500H1zM10 5.500a4 4 0 0 1 0 5M12.200 3.500a7 7 0 0 1 0 9M14.500 1.800a9.500 9.500 0 0 1 0 12.400" />
        </svg>
      </div>
      <button className="ml-1.5 w-[58px] text-center leading-[18px]">
        <span className="block">5:26 PM</span>
        <span className="block">7/2/2024</span>
      </button>
      <button aria-label="Notifications" className="flex w-[45px] items-center justify-center">
        <svg viewBox="0 0 16 16" fill="none" stroke="#fff" className="size-4">
          <path d="M.5 1h15v12h-5L8 15.500 5.500 13h-5z" />
        </svg>
      </button>
      <span className="mr-1 ml-1.5 w-px bg-[#5b626e]" />
    </footer>
  );
}

function Watermark() {
  return (
    <div className="absolute right-[49px] bottom-2 flex items-center gap-1 font-['Roboto_Condensed','Liberation_Sans_Narrow',sans-serif] text-[38px] leading-[60px] text-[#b4c8ec]/75">
      <span>ANY</span>
      <svg viewBox="0 0 56 62" fill="none" stroke="currentColor" strokeWidth="3.500" strokeLinejoin="round" strokeLinecap="round" className="h-[62px] w-14">
        <path d="M7 8H5Q3 8 3 11v40q0 3 3 3" />
        <path d="M50 26L14 3q-3-1-3 2v38" />
        <path d="M49 27l-5-1L18 14v28l21-13" opacity=".75" />
        <path d="M4 54L38 31M11 58q1 4 4 1l38-23q3-2 0-4L19 12" />
      </svg>
      <span>RUN</span>
    </div>
  );
}

export default function App() {
  return (
    <div className="flex min-h-screen flex-col bg-[#008cf0] font-['Open_Sans','Noto_Sans',sans-serif] text-[11px] leading-4">
      <main className="relative flex-1 overflow-hidden bg-[linear-gradient(to_bottom,rgba(0,110,220,0.3)_0%,rgba(0,110,220,0)_45%),linear-gradient(100deg,#00b0ff_0%,#00b4ff_34%,#009ff5_50%,#0073e2_66%,#0050d0_82%,#003ab8_100%)]">
        <div className="grid w-fit grid-flow-col grid-cols-[repeat(3,75px)] grid-rows-[repeat(6,108px)]">
          {desktop.map(({ label, icon: Icon, shortcut }) => (
            <button key={label} className="flex flex-col items-center pt-1.5 pr-px text-center leading-[15px] text-white [text-shadow:0_1px_2px_rgba(0,0,0,0.5)]">
              <span className="relative mb-1 size-12">
                <Icon className="size-12" />
                {shortcut && <ShortcutBadge />}
              </span>
              <span className="w-[72px]">{label}</span>
            </button>
          ))}
        </div>
        <section className="absolute top-9 right-[182px] bottom-[51px] left-[312px] flex flex-col bg-white px-px shadow-[0_4px_14px_rgba(0,0,0,0.3)]">
          <TitleBar />
          <Tabs />
          <Ribbon />
          <AddressRow />
          <Body />
          <StatusBar />
        </section>
        <ContextMenu />
        <Watermark />
      </main>
      <Taskbar />
    </div>
  );
}
